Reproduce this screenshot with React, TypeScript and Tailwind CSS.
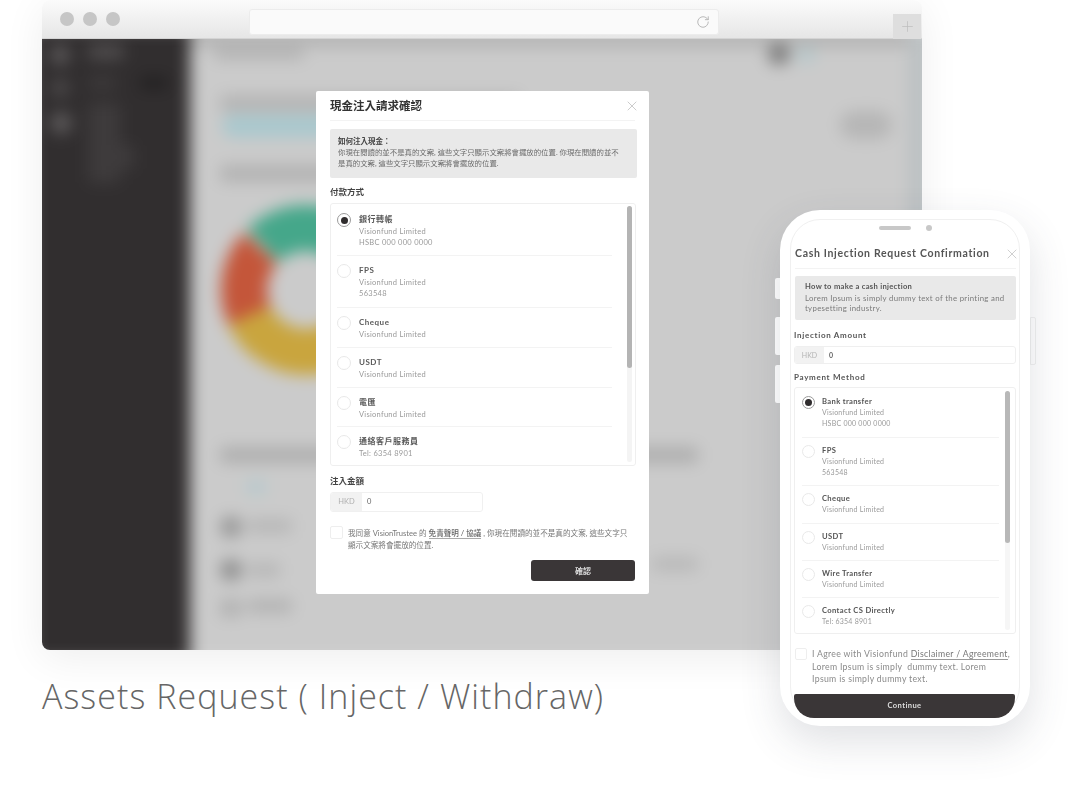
import { RotateCw, X, Plus } from "lucide-react";

const cjk = "font-['Lato','Noto_Sans_CJK_TC',sans-serif]";

const desktopRows = [
  { t: "銀行轉帳", l: ["Visionfund Limited", "HSBC 000 000 0000"], on: true, h: "h-[44px]" },
  { t: "FPS", l: ["Visionfund Limited", "563548"], h: "h-[52px]" },
  { t: "Cheque", l: ["Visionfund Limited"], h: "h-[40px]" },
  { t: "USDT", l: ["Visionfund Limited"], h: "h-[40px]" },
  { t: "電匯", l: ["Visionfund Limited"], h: "h-[39px]" },
  { t: "通絡客戶服務員", l: ["Tel: 6354 8901"], h: "h-[36px]", last: true },
];

const phoneRows = [
  { t: "Bank transfer", l: ["Visionfund Limited", "HSBC 000 000 0000"], on: true, h: "h-[42px]" },
  { t: "FPS", l: ["Visionfund Limited", "563548"], h: "h-[48px]" },
  { t: "Cheque", l: ["Visionfund Limited"], h: "h-[38px]" },
  { t: "USDT", l: ["Visionfund Limited"], h: "h-[37px]" },
  { t: "Wire Transfer", l: ["Visionfund Limited"], h: "h-[37px]" },
  { t: "Contact CS Directly", l: ["Tel: 6354 8901"], h: "h-[31px]", last: true },
];

function Radio({ on, small }: { on?: boolean; small?: boolean }) {
  return (
    <span
      className={`flex shrink-0 items-center justify-center rounded-full border ${small ? "h-[13px] w-[13px]" : "h-[14px] w-[14px]"} ${on ? "border-[#9a9a9a] bg-white" : "border-[#e8e8e8] bg-white"}`}
    >
      {on && <span className="h-[7px] w-[7px] rounded-full bg-[#2f2c2d]" />}
    </span>
  );
}

function Blob({ className }: { className: string }) {
  return <div className={`absolute ${className}`} />;
}

function BlurredPage() {
  return (
    <div className="absolute -inset-[12px] flex blur-[8px]">
      <div className="relative w-[160px] shrink-0 bg-[#312e2f]">
        <Blob className="left-[20px] top-[18px] h-[20px] w-[20px] rounded-full bg-[#5c595a]" />
        <Blob className="left-[20px] top-[51px] h-[20px] w-[20px] rounded-full bg-[#4a4748]" />
        <Blob className="left-[20px] top-[85px] h-[22px] w-[22px] rounded-full bg-[#5c595a]" />
        <Blob className="left-[58px] top-[18px] h-[14px] w-[36px] rounded bg-[#524f50]" />
        <Blob className="left-[58px] top-[50px] h-[12px] w-[28px] rounded bg-[#3e3b3c]" />
        <Blob className="left-[58px] top-[76px] h-[80px] w-[32px] rounded bg-[#3e3b3c]" />
        <Blob className="left-[58px] top-[118px] h-[24px] w-[46px] rounded bg-[#3e3b3c]" />
        <Blob className="left-[110px] top-[50px] h-[12px] w-[28px] rounded bg-[#222021]" />
      </div>
      <div className="relative flex-1 bg-[#cbcbcb]">
        <Blob className="inset-x-0 top-0 h-[20px] bg-[#b4b4b4]" />
        <Blob className="inset-y-0 right-0 w-[26px] bg-[#bcc1c3]" />
        <Blob className="left-[24px] top-[22px] h-[10px] w-[90px] rounded bg-[#b0b0b0]" />
        <Blob className="left-[30px] top-[68px] h-[17px] w-[300px] rounded bg-[#b4b4b4]" />
        <Blob className="left-[32px] top-[88px] h-[22px] w-[220px] rounded-full bg-[#a8c8ce]" />
        <Blob className="left-[30px] top-[138px] h-[17px] w-[300px] rounded bg-[#b2b2b2]" />
        <svg viewBox="0 0 200 200" className="absolute left-[16px] top-[163px] h-[200px] w-[200px]">
          <circle cx="100" cy="100" r="62" fill="none" stroke="#c9a53e" strokeWidth="46" strokeDasharray="172 218" transform="rotate(-2 100 100)" />
          <circle cx="100" cy="100" r="62" fill="none" stroke="#c4563a" strokeWidth="46" strokeDasharray="72 318" transform="rotate(156 100 100)" />
          <circle cx="100" cy="100" r="62" fill="none" stroke="#45a78a" strokeWidth="46" strokeDasharray="132 258" transform="rotate(226 100 100)" />
        </svg>
        <Blob className="left-[30px] top-[420px] h-[16px] w-[478px] rounded bg-[#aeaeae]" />
        <Blob className="left-[56px] top-[453px] h-[14px] w-[20px] rounded bg-[#b6cacd]" />
        <Blob className="left-[30px] top-[489px] h-[22px] w-[22px] rounded-full bg-[#989898]" />
        <Blob className="left-[58px] top-[492px] h-[14px] w-[44px] rounded bg-[#b6b6b6]" />
        <Blob className="left-[30px] top-[532px] h-[22px] w-[22px] rounded-full bg-[#8f8f8f]" />
        <Blob className="left-[58px] top-[536px] h-[14px] w-[32px] rounded bg-[#b6b6b6]" />
        <Blob className="left-[30px] top-[572px] h-[18px] w-[22px] rounded bg-[#b2b2b2]" />
        <Blob className="left-[58px] top-[572px] h-[14px] w-[44px] rounded bg-[#b2b2b2]" />
        <Blob className="left-[462px] top-[530px] h-[14px] w-[46px] rounded bg-[#b8b8b8]" />
        <Blob className="left-[578px] top-[16px] h-[22px] w-[22px] rounded-full bg-[#7c7c7c]" />
        <Blob className="left-[606px] top-[20px] h-[16px] w-[20px] rounded-full bg-[#b6c8cb]" />
        <Blob className="left-[650px] top-[84px] h-[28px] w-[52px] rounded-full bg-[#b6b6b6]" />
      </div>
    </div>
  );
}

function DesktopModal() {
  return (
    <div className={`absolute left-[274px] top-[52px] flex h-[503px] w-[333px] flex-col rounded-[2px] bg-white px-[14px] text-[#4a4a4a] ${cjk}`}>
      <div className="flex h-[30px] items-start justify-between border-b border-[#f3f3f3] pt-[8px] blur-[0.45px]">
        <span className="text-[11.5px] font-bold leading-[13px] text-[#333]">現金注入請求確認</span>
        <X className="-mr-[5px] -mt-[1px] h-[16px] w-[16px] text-[#c4c4c4]" strokeWidth={1.3} />
      </div>
      <div className="mt-[8px] h-[49px] w-[307px] rounded-[2px] bg-[#e9e9e9] px-[8px] pt-[7px] blur-[0.45px]">
        <div className="text-[7.5px] font-bold leading-[11px] text-[#444]">如何注入現金：</div>
        <div className="mt-[1px] whitespace-nowrap text-[7.4px] leading-[10.5px] text-[#6b6b6b]">
          你現在閱讀的並不是真的文案, 這些文字只顯示文案將會擺放的位置. 你現在閱讀的並不
          <br />
          是真的文案, 這些文字只顯示文案將會擺放的位置.
        </div>
      </div>
      <div className="mt-[8px] text-[8.5px] font-bold leading-[13px] text-[#444] blur-[0.45px]">付款方式</div>
      <div className="relative mt-[4px] h-[263px] w-[306px] rounded-[3px] border border-[#efefef] px-[6px] pt-[8px] blur-[0.45px]">
        <div className="absolute bottom-[3px] right-[3px] top-[2px] w-[5px] rounded-full bg-[#f4f4f4]">
          <div className="h-[162px] w-full rounded-full bg-[#b4b4b4]" />
        </div>
        {desktopRows.map((r, i) => (
          <div key={i} className={`flex w-[275px] gap-[8px] ${r.h} ${r.last ? "" : "border-b border-[#f3f3f3]"} ${i ? "pt-[8px]" : "pt-[1px]"}`}>
            <Radio on={r.on} />
            <div>
              <div className="text-[8px] font-bold leading-[12.5px] tracking-[0.5px] text-[#5a5a5a]">{r.t}</div>
              {r.l.map((x) => (
                <div key={x} className="text-[7.5px] leading-[11.5px] tracking-[0.28px] text-[#9a9a9a]">{x}</div>
              ))}
            </div>
          </div>
        ))}
      </div>
      <div className="mt-[9px] text-[8.5px] font-bold leading-[13px] text-[#444] blur-[0.45px]">注入金額</div>
      <div className="mt-[4px] flex h-[20px] w-[153px] overflow-hidden rounded-[3px] border border-[#f0f0f0] text-[7.5px] blur-[0.45px]">
        <span className="flex w-[31px] items-center justify-center bg-[#f2f2f2] text-[#b0b0b0]">HKD</span>
        <span className="flex items-center pl-[5px] text-[#666]">0</span>
      </div>
      <div className="mt-[13px] flex gap-[5px] blur-[0.45px]">
        <span className="mt-[1px] h-[13px] w-[13px] shrink-0 rounded-[2px] border border-[#eee]" />
        <div className="mt-[2px] whitespace-nowrap text-[7.6px] leading-[12px] text-[#777]">
          我同意 VisionTrustee 的 <span className="border-b border-[#aaa] font-medium text-[#666]">免責聲明 / 協議</span> , 你現在閱讀的並不是真的文案, 這些文字只
          <br />
          顯示文案將會擺放的位置.
        </div>
      </div>
      <button className="ml-auto mt-[9px] flex h-[21px] w-[104px] items-center justify-center rounded-[3px] bg-[#3a3637] text-[8px] font-bold text-[#ddd] blur-[0.3px]">確認</button>
    </div>
  );
}

function Browser() {
  return (
    <div className="absolute left-[42px] top-0 flex h-[650px] w-[880px] flex-col overflow-hidden rounded-[8px] shadow-[0_8px_40px_rgba(0,0,0,0.07)]">
      <div className="relative z-10 flex h-[39px] shrink-0 items-center border-b border-[#d4d4d4] bg-gradient-to-b from-[#fbfbfb] to-[#e6e6e6] pl-[18px]">
        <div className="flex gap-[9px]">
          <span className="h-[14px] w-[14px] rounded-full bg-[#c6c6c6]" />
          <span className="h-[14px] w-[14px] rounded-full bg-[#c6c6c6]" />
          <span className="h-[14px] w-[14px] rounded-full bg-[#c6c6c6]" />
        </div>
        <div className="ml-[129px] mt-[5px] flex h-[26px] w-[470px] items-center justify-end rounded-[3px] border border-[#ececec] bg-[#fafafa] pr-[8px]">
          <RotateCw className="h-[14px] w-[14px] text-[#b4b4b4]" strokeWidth={1.6} />
        </div>
        <div className="ml-auto mr-[1px] mt-[15px] flex h-[25px] w-[28px] items-center justify-center bg-[#dedede]">
          <Plus className="h-[17px] w-[17px] text-[#bcbcbc]" strokeWidth={1} />
        </div>
      </div>
      <div className="relative flex-1 overflow-hidden">
        <BlurredPage />
        <DesktopModal />
      </div>
    </div>
  );
}

function Phone() {
  return (
    <div className="absolute left-[775px] top-[210px] h-[516px] w-[261px]">
      <span className="absolute left-0 top-[68px] h-[21px] w-[6px] rounded-l-[2px] bg-white" />
      <span className="absolute left-0 top-[107px] h-[38px] w-[6px] rounded-l-[2px] bg-white" />
      <span className="absolute left-0 top-[155px] h-[38px] w-[6px] rounded-l-[2px] bg-white" />
      <span className="absolute right-0 top-[107px] h-[48px] w-[6px] rounded-r-[2px] border border-[#f0f0f0] bg-white" />
      <div className={`absolute left-[5px] top-0 h-[516px] w-[250px] rounded-[40px] bg-white px-[10px] text-[#4a4a4a] shadow-[0_16px_40px_rgba(60,70,90,0.16)] ${cjk}`}>
        <div className="pointer-events-none absolute inset-x-[10px] inset-y-[9px] rounded-[30px] border border-[#f0f0f0]" />
        <div className="relative h-full blur-[0.4px]">
          <div className="flex items-center justify-center gap-[15px] pt-[15px]">
            <span className="h-[4px] w-[32px] rounded-full bg-[#c8c8c8]" />
            <span className="h-[6px] w-[6px] rounded-full bg-[#c8c8c8]" />
          </div>
          <div className="ml-[5px] mt-[15px] flex h-[23px] w-[221px] items-start justify-between border-b border-[#f3f3f3]">
            <span className="whitespace-nowrap text-[10.5px] font-bold leading-[14px] tracking-[0.68px] text-[#555]">Cash Injection Request Confirmation</span>
            <X className="-mr-[4px] h-[16px] w-[16px] text-[#c8c8c8]" strokeWidth={1.3} />
          </div>
          <div className="ml-[5px] mt-[7px] h-[44px] w-[221px] rounded-[2px] bg-[#e9e9e9] px-[10px] pt-[4px]">
            <div className="text-[7.6px] font-bold leading-[12px] tracking-[0.3px] text-[#555]">How to make a cash injection</div>
            <div className="mt-[1px] whitespace-nowrap text-[7.8px] leading-[10px] tracking-[0.32px] text-[#7a7a7a]">
              Lorem Ipsum is simply dummy text of the printing and
              <br />
              typesetting industry.
            </div>
          </div>
          <div className="ml-[4px] mt-[9px] text-[8px] font-bold leading-[12px] tracking-[0.7px] text-[#555]">Injection Amount</div>
          <div className="ml-[4px] mt-[5px] flex h-[18px] w-[222px] overflow-hidden rounded-[3px] border border-[#efefef] text-[7px]">
            <span className="flex w-[29px] items-center justify-center bg-[#f2f2f2] text-[#b4b4b4]">HKD</span>
            <span className="flex items-center pl-[5px] font-bold text-[#666]">0</span>
          </div>
          <div className="ml-[4px] mt-[7px] text-[8px] font-bold leading-[12px] tracking-[0.7px] text-[#555]">Payment Method</div>
          <div className="relative ml-[4px] mt-[4px] h-[247px] w-[222px] rounded-[3px] border border-[#efefef] px-[7px] pt-[8px]">
            <div className="absolute bottom-[3px] right-[5px] top-[3px] w-[5px] rounded-full bg-[#f6f6f6]">
              <div className="h-[152px] w-full rounded-full bg-[#b8b8b8]" />
            </div>
            {phoneRows.map((r, i) => (
              <div key={i} className={`flex w-[197px] gap-[7px] ${r.h} ${r.last ? "" : "border-b border-[#f3f3f3]"} ${i ? "pt-[7px]" : ""}`}>
                <Radio on={r.on} small />
                <div>
                  <div className="whitespace-nowrap text-[7.6px] font-bold leading-[11px] tracking-[0.35px] text-[#555]">{r.t}</div>
                  {r.l.map((x) => (
                    <div key={x} className="whitespace-nowrap text-[7px] leading-[10.5px] tracking-[0.25px] text-[#9a9a9a]">{x}</div>
                  ))}
                </div>
              </div>
            ))}
          </div>
          <div className="ml-[5px] mt-[14px] flex gap-[5px]">
            <span className="h-[12px] w-[12px] shrink-0 rounded-[2px] border border-[#eee]" />
            <div className="whitespace-nowrap text-[8.7px] leading-[12.5px] tracking-[0.32px] text-[#8a8a8a]">
              I Agree with Visionfund <span className="border-b border-[#999] text-[#777]">Disclaimer / Agreement</span>,
              <br />
              Lorem Ipsum is simply&nbsp; dummy text. Lorem
              <br />
              Ipsum is simply dummy text.
            </div>
          </div>
          <button className="ml-[4px] mt-[8px] flex h-[24px] w-[221px] items-center justify-center rounded-b-[20px] rounded-t-[2px] bg-[#3a3637] text-[7.6px] font-bold tracking-[0.4px] text-[#ddd]">Continue</button>
        </div>
      </div>
    </div>
  );
}

export default function App() {
  return (
    <div className={`relative h-[788px] w-[1088px] overflow-hidden bg-white ${cjk}`}>
      <Browser />
      <h1 className="absolute left-[42px] top-[675px] font-['Open_Sans',sans-serif] text-[34px] font-light leading-[42px] tracking-[1.05px] text-[#666]">Assets Request ( Inject / Withdraw)</h1>
      <Phone />
    </div>
  );
}
